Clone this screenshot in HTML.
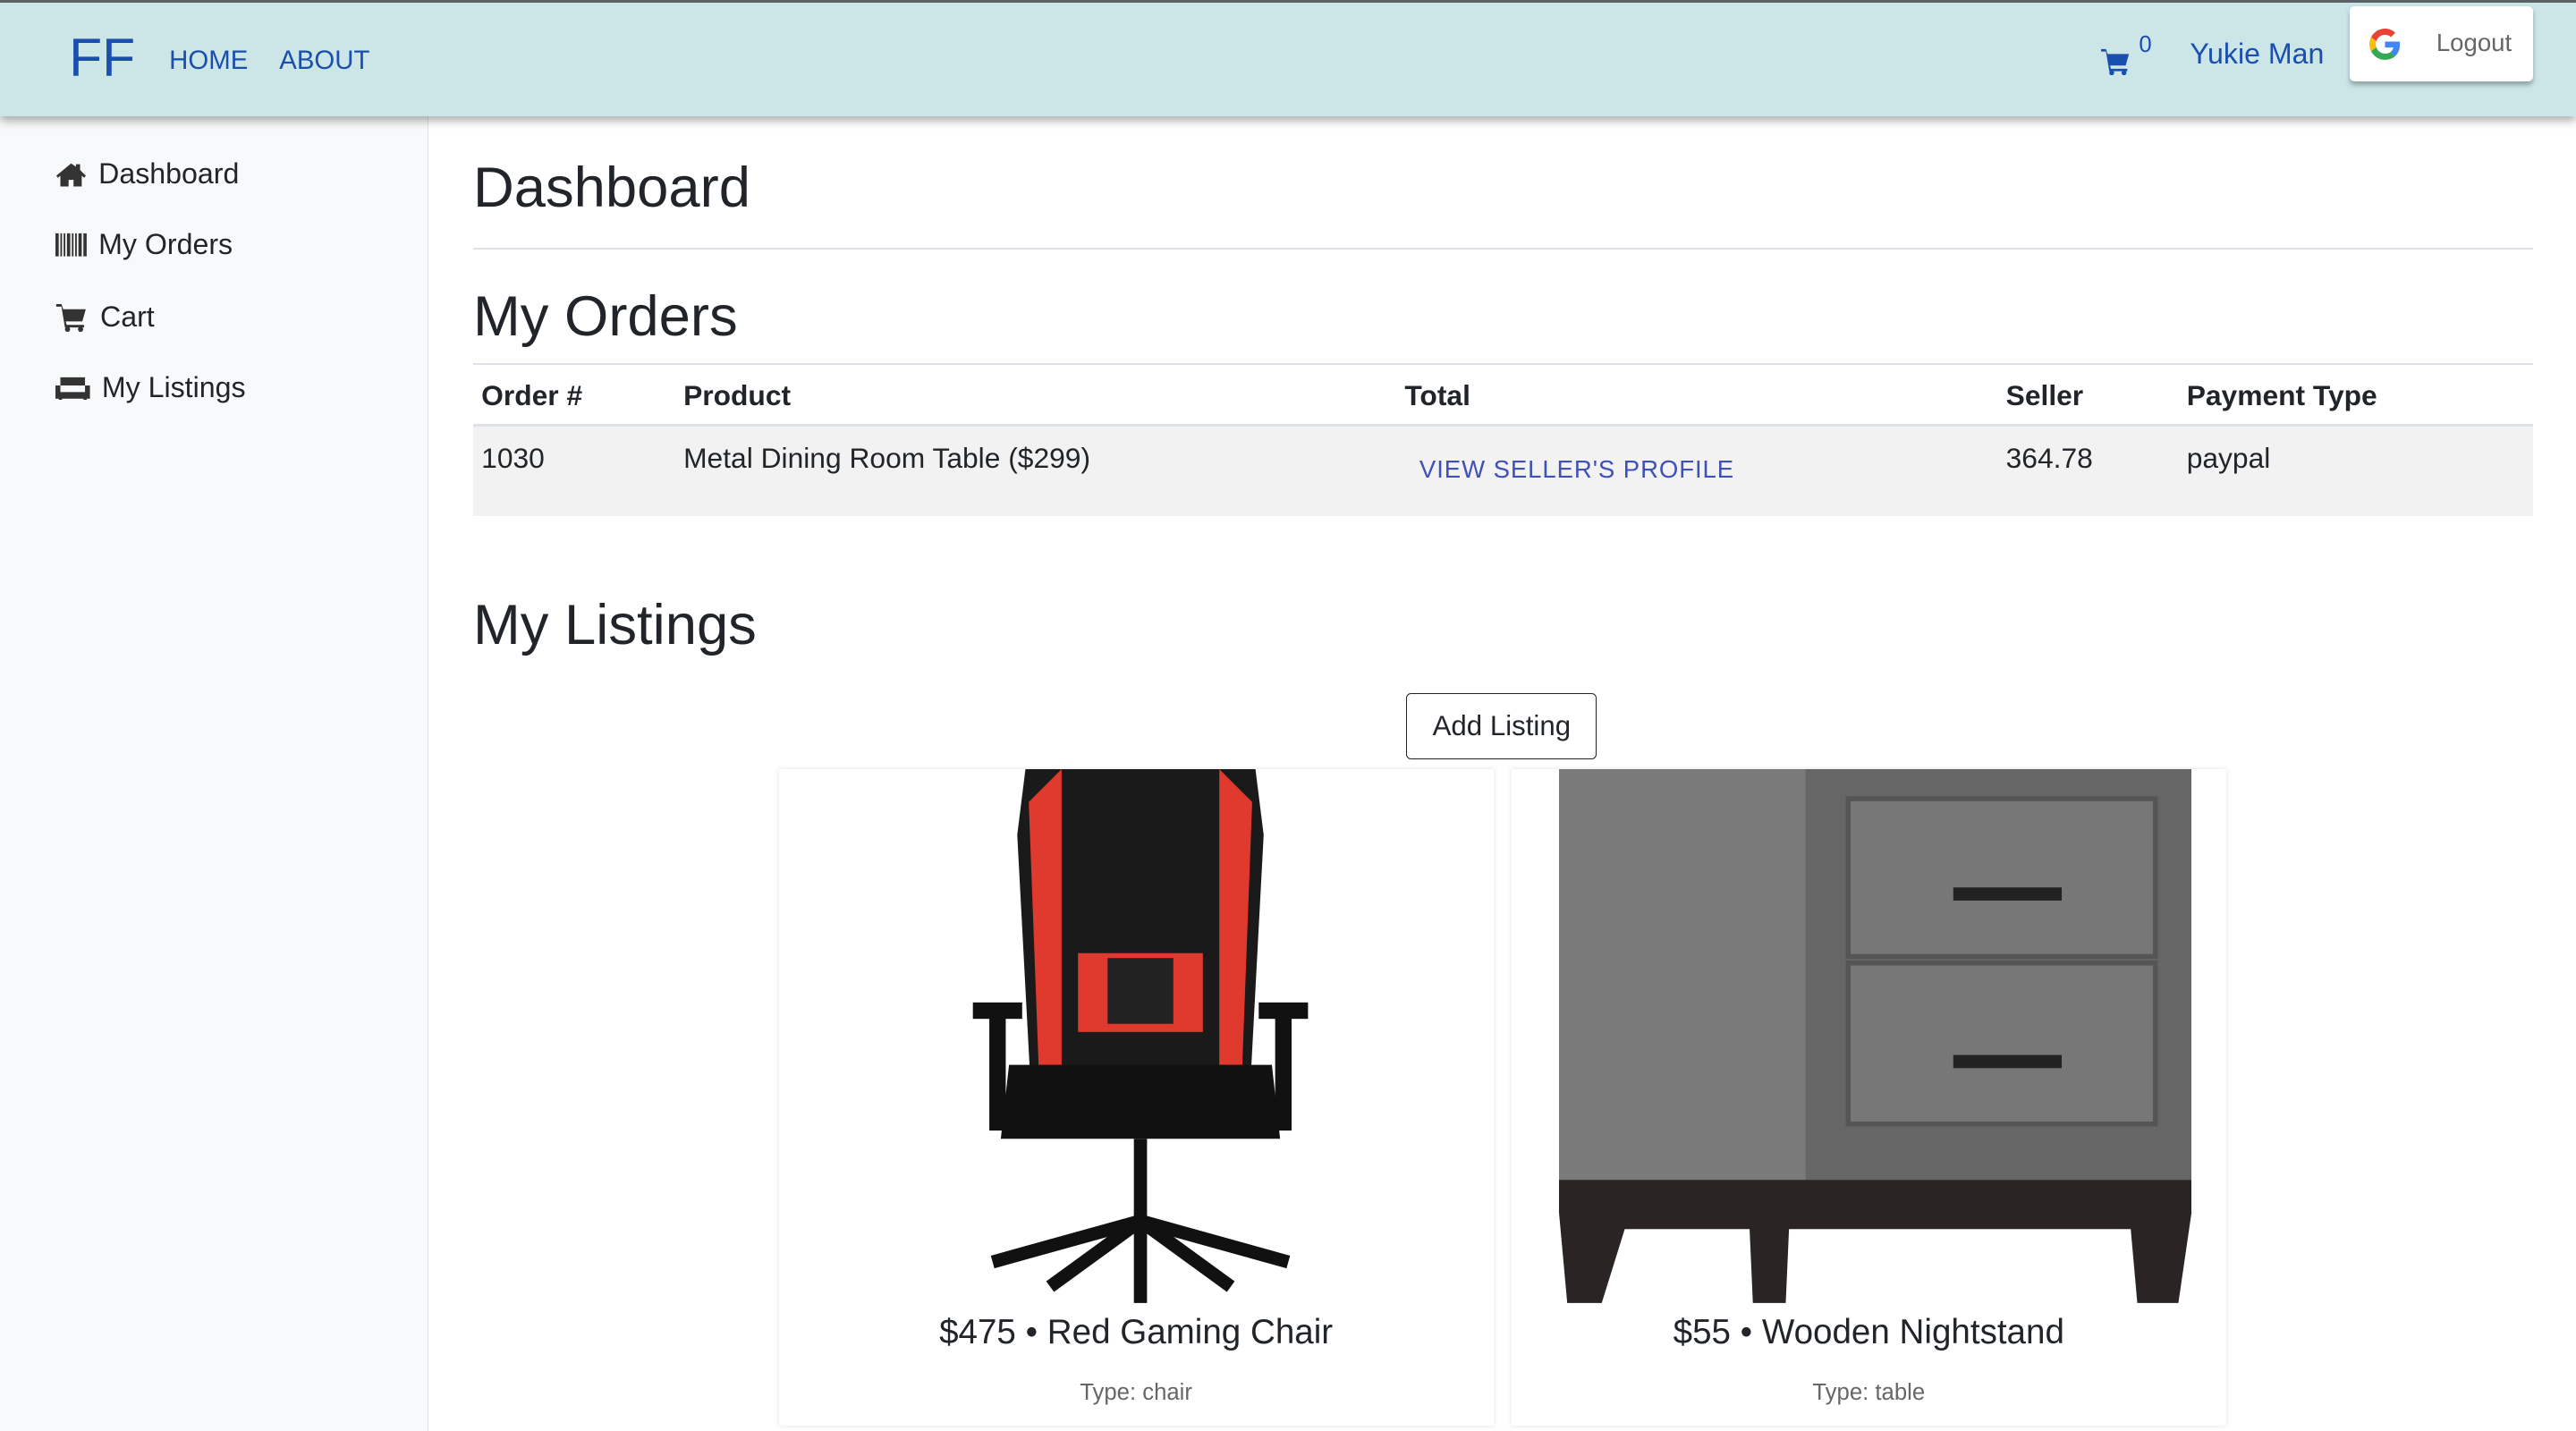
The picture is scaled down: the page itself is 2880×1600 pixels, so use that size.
<!DOCTYPE html>
<html><head><meta charset="utf-8"><style>
html{zoom:1.83673}
body{margin:0;width:1568px;height:860px;overflow:hidden;font-family:"Liberation Sans",sans-serif;color:#212529;background:#fff;position:relative}
.top{position:absolute;left:0;top:0;width:1568px;height:71px;background:#cce6e8;border-top:2px solid #5a6266;box-sizing:border-box;box-shadow:0 3px 5px rgba(0,0,0,.3);z-index:2}
.blue{color:#1a4fae}
.side{position:absolute;left:0;top:71px;width:260px;height:800px;background:#f8f9fa;border-right:1px solid #dee2e6}
.side div{position:absolute;left:34px;font-size:17.5px;display:flex;align-items:center;gap:7px}
.abs{position:absolute}
h1{position:absolute;margin:0;font-weight:400}
.hr{position:absolute;left:288px;width:1254px;height:1px;background:#dee2e6}
.th{position:absolute;top:231px;font-weight:700;font-size:17.3px}
.td{position:absolute;top:269px;font-size:17.3px}
.card{position:absolute;top:468px;width:435px;height:400px;background:#fff;box-shadow:0 0 3px rgba(0,0,0,.12)}
.cap{position:absolute;width:100%;text-align:center}
</style></head><body>
<div class="top">
 <div class="abs blue" style="left:42px;top:14px;font-size:33px">FF</div>
 <div class="abs blue" style="left:103px;top:26px;font-size:16px">HOME</div>
 <div class="abs blue" style="left:170px;top:26px;font-size:16px">ABOUT</div>
 <svg class="abs" style="left:1279px;top:27px" width="18" height="17" viewBox="0 0 18 17"><path d="M0 1h3l1 3h13l-2 7H5.5L6 13h10v1.5H5L3 2.5H0z" fill="#1a4fae"/><circle cx="6.5" cy="15.5" r="1.5" fill="#1a4fae"/><circle cx="14" cy="15.5" r="1.5" fill="#1a4fae"/></svg>
 <div class="abs blue" style="left:1302px;top:18px;font-size:14px">0</div>
 <div class="abs blue" style="left:1333px;top:21px;font-size:17.5px">Yukie Man</div>
 <div class="abs" style="left:1430px;top:2px;width:112px;height:46px;background:#fff;border-radius:3px;box-shadow:0 2px 3px rgba(0,0,0,.3)">
  <svg class="abs" style="left:12px;top:14px" width="19" height="19" viewBox="0 0 48 48"><path fill="#EA4335" d="M24 9.5c3.5 0 6.6 1.2 9.1 3.6l6.8-6.8C35.800 2.4 30.3 0 24 0 14.6 0 6.6 5.4 2.7 13.3l7.9 6.1C12.5 13.7 17.8 9.5 24 9.5z"/><path fill="#4285F4" d="M46.9 24.5c0-1.6-.1-3.1-.4-4.5H24v9h12.9c-.6 3-2.3 5.5-4.8 7.2l7.7 6c4.5-4.2 7.1-10.300 7.1-17.7z"/><path fill="#FBBC05" d="M10.5 28.6c-.5-1.4-.8-3-.8-4.6s.3-3.2.8-4.6l-7.9-6.1C1 16.5 0 20.1 0 24s1 7.5 2.7 10.7l7.8-6.1z"/><path fill="#34A853" d="M24 48c6.5 0 11.9-2.1 15.9-5.8l-7.7-6c-2.2 1.5-5 2.3-8.2 2.3-6.2 0-11.5-4.2-13.4-9.9l-7.9 6.1C6.6 42.6 14.6 48 24 48z"/></svg>
  <div class="abs" style="left:53px;top:14px;font-size:15px;color:#666">Logout</div>
 </div>
</div>
<div class="side">
 <div style="top:25px"><svg width="19" height="16" viewBox="0 0 19 15"><path d="M9.5 1L0.5 8.5l1 1.2L3 8.5V15h5v-4h3v4h5V8.5l1.5 1.2 1-1.2L15 5V1.5h-2.5v1.5z" fill="#333"/></svg>Dashboard</div>
 <div style="top:68px"><svg width="19" height="15" viewBox="0 0 19 14"><g fill="#333"><rect x="0" width="2" height="14"/><rect x="3" width="1" height="14"/><rect x="5" width="1" height="14"/><rect x="7" width="2" height="14"/><rect x="10" width="1" height="14"/><rect x="12" width="1" height="14"/><rect x="14" width="2" height="14"/><rect x="17" width="2" height="14"/></g></svg>My Orders</div>
 <div style="top:112px"><svg width="20" height="18" viewBox="0 0 18 17"><path d="M0 1h3l1 3h13l-2 7H5.5L6 13h10v1.5H5L3 2.5H0z" fill="#333"/><circle cx="6.5" cy="15.5" r="1.5" fill="#333"/><circle cx="14" cy="15.5" r="1.5" fill="#333"/></svg>Cart</div>
 <div style="top:155px"><svg width="21" height="15" viewBox="0 0 21 15"><path d="M3 1h15v5H3zM0 6h3v4h15V6h3v8h-2v1h-2v-1H4v1H2v-1H0z" fill="#333"/></svg>My Listings</div>
</div>
<h1 style="left:288px;top:95px;font-size:34.5px">Dashboard</h1>
<div class="hr" style="top:151px"></div>
<h1 style="left:288px;top:173px;font-size:34.5px">My Orders</h1>
<div class="hr" style="top:221px"></div>
<div class="th" style="left:293px">Order #</div><div class="th" style="left:416px">Product</div><div class="th" style="left:855px">Total</div><div class="th" style="left:1221px">Seller</div><div class="th" style="left:1331px">Payment Type</div>
<div class="abs" style="left:288px;top:258px;width:1254px;height:56px;background:#f2f2f2;border-top:2px solid #dee2e6;box-sizing:border-box"></div>
<div class="td" style="left:293px">1030</div><div class="td" style="left:416px">Metal Dining Room Table ($299)</div>
<div class="td" style="left:864px;top:277px;font-size:15px;color:#3f51b5;letter-spacing:.5px">VIEW SELLER'S PROFILE</div>
<div class="td" style="left:1221px">364.78</div><div class="td" style="left:1331px">paypal</div>
<h1 style="left:288px;top:361px;font-size:34.5px">My Listings</h1>
<div class="abs" style="left:856px;top:422px;width:115px;height:39px;border:1px solid #222;border-radius:3px;font-size:17px;line-height:39px;text-align:center">Add Listing</div>
<div class="card" style="left:474px">
 <svg class="abs" style="left:110px;top:0" width="220" height="327" viewBox="0 0 220 327">
  <path d="M40 0h140l5 40-8 150H43L35 40z" fill="#1a1a1a"/>
  <path d="M42 20l20-20v180H48z M178 20l-20-20v180h14z" fill="#e0392e"/>
  <rect x="72" y="112" width="76" height="48" fill="#e0392e"/><rect x="90" y="115" width="40" height="40" fill="#222"/>
  <path d="M30 180h160l5 45H25z" fill="#111"/>
  <rect x="8" y="142" width="30" height="10" fill="#111"/><rect x="182" y="142" width="30" height="10" fill="#111"/>
  <rect x="18" y="150" width="10" height="70" fill="#111"/><rect x="192" y="150" width="10" height="70" fill="#111"/>
  <rect x="106" y="225" width="8" height="50" fill="#111"/>
  <path d="M110 275L20 300M110 275l90 25M110 275l-55 40M110 275l55 40M110 275v50" stroke="#111" stroke-width="8"/>
 </svg>
 <div class="cap" style="top:331px;font-size:21px">$475 • Red Gaming Chair</div>
 <div class="cap" style="top:372px;font-size:14px;color:#666">Type: chair</div>
</div>
<div class="card" style="left:920px">
 <svg class="abs" style="left:29px;top:0" width="385" height="327" viewBox="0 0 385 327">
  <rect width="385" height="327" fill="#fff"/>
  <path d="M0 0h385v245H0z" fill="#6b6b6b"/><path d="M0 0h150v250H0z" fill="#7a7a7a"/>
  <rect x="150" y="0" width="235" height="250" fill="#666"/>
  <rect x="176" y="18" width="187" height="96" fill="#777" stroke="#555" stroke-width="3"/>
  <rect x="176" y="118" width="187" height="98" fill="#777" stroke="#555" stroke-width="3"/>
  <rect x="240" y="72" width="66" height="8" fill="#222"/><rect x="240" y="174" width="66" height="8" fill="#222"/>
  <path d="M0 250h385v20l-8 55h-25l-4-45H140l-2 45h-20l-2-45H40l-14 45H5L0 270z" fill="#2a2424"/>
 </svg>
 <div class="cap" style="top:331px;font-size:21px">$55 • Wooden Nightstand</div>
 <div class="cap" style="top:372px;font-size:14px;color:#666">Type: table</div>
</div>
</body></html>
